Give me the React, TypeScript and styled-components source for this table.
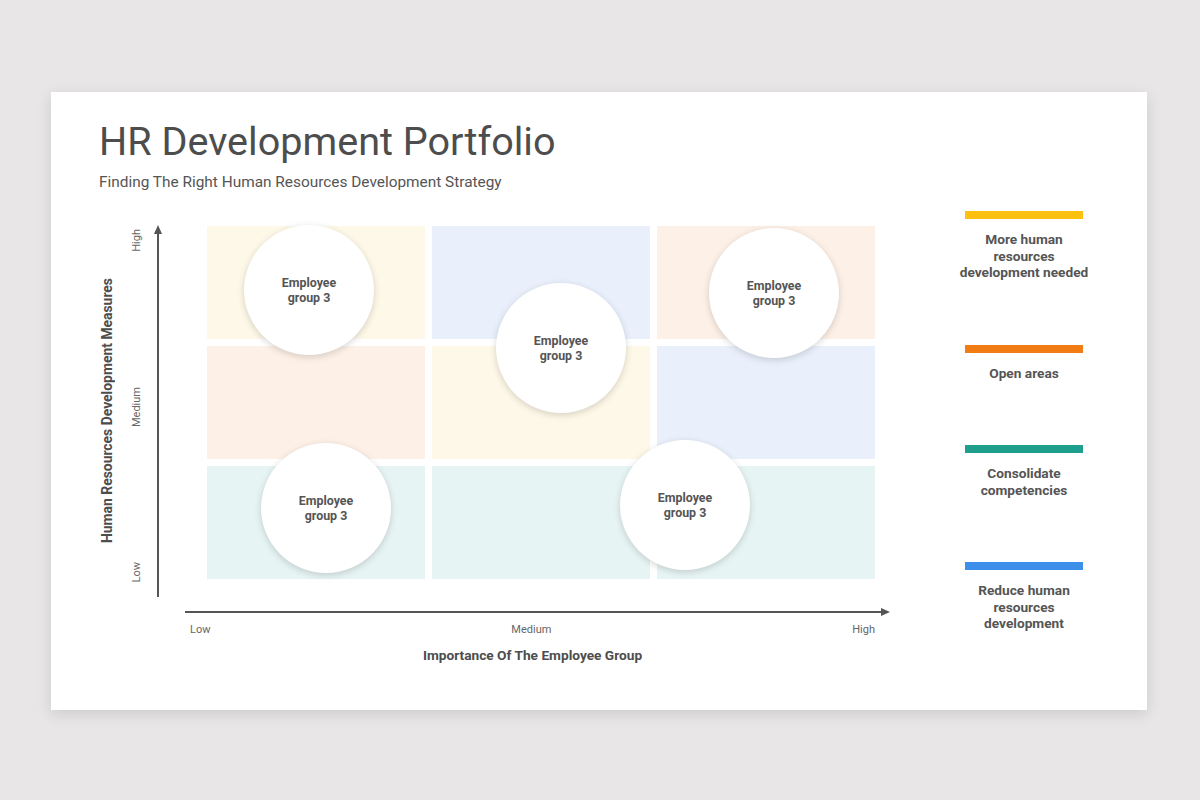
import styled, { createGlobalStyle } from "styled-components";

const GlobalStyle = createGlobalStyle`
  html, body {
    margin: 0;
    padding: 0;
    background: #e8e6e7;
    font-family: Roboto, "Liberation Sans", sans-serif;
  }
`;

const Page = styled.div`
  width: 1200px;
  height: 800px;
  padding: 92px 0 0 51px;
  box-sizing: border-box;
`;

const Slide = styled.div`
  width: 1096px;
  height: 618px;
  background: #ffffff;
  box-shadow: 0 4px 14px rgba(0, 0, 0, 0.12);
  padding: 26px 0 0 48px;
  box-sizing: border-box;
`;

const Title = styled.h1`
  margin: 0;
  font-size: 39.6px;
  line-height: 48px;
  font-weight: 400;
  color: #4d4d4d;
`;

const Subtitle = styled.p`
  margin: 6px 0 0;
  font-size: 15.4px;
  line-height: 20px;
  color: #555555;
`;

const Body = styled.div`
  display: flex;
  align-items: flex-start;
  margin-top: 19px;
`;

const Chart = styled.div`
  display: flex;
  align-items: flex-start;
  padding-top: 14px;
  width: 855px;
`;

const YSide = styled.div`
  display: flex;
  height: 372px;
`;

const VerticalText = styled.span<{ $bold?: boolean }>`
  writing-mode: vertical-rl;
  transform: rotate(180deg);
  font-size: ${(p) => (p.$bold ? "13.9px" : "11px")};
  font-weight: ${(p) => (p.$bold ? 700 : 400)};
  color: ${(p) => (p.$bold ? "#4d4d4d" : "#666666")};
  line-height: 16px;
  white-space: nowrap;
`;

const YTitleCol = styled.div`
  width: 16px;
  display: flex;
  align-items: center;
  justify-content: center;
`;

const YLabels = styled.div`
  width: 16px;
  margin-left: 14px;
  display: flex;
  flex-direction: column;
  justify-content: space-between;
  align-items: center;
  padding: 4px 0 15px;
  box-sizing: border-box;
`;

const YAxisSvg = styled.svg`
  display: block;
  margin-left: 6px;
`;

const Main = styled.div`
  display: flex;
  flex-direction: column;
`;

const Plot = styled.div`
  position: relative;
  margin: 1px 0 0 42px;
  display: grid;
  grid-template-columns: repeat(3, 218px);
  grid-template-rows: repeat(3, 113px);
  gap: 7px;
`;

const Cell = styled.div<{ $tone: string }>`
  background: ${(p) => p.$tone};
`;

const Bubble = styled.div`
  position: absolute;
  width: 130px;
  height: 130px;
  border-radius: 50%;
  background: #ffffff;
  box-shadow: 0 2px 7px rgba(0, 0, 0, 0.16);
  display: flex;
  align-items: center;
  justify-content: center;
  text-align: center;
  font-size: 12.4px;
  line-height: 15px;
  font-weight: 700;
  color: #555555;
`;

const XAxisSvg = styled.svg`
  display: block;
  margin: 28px 0 0 20px;
`;

const XLabels = styled.div`
  display: flex;
  justify-content: space-between;
  width: 685px;
  margin: 6px 0 0 25px;
  font-size: 11px;
  line-height: 14px;
  color: #666666;
`;

const XTitle = styled.div`
  width: 685px;
  margin: 10px 0 0 25px;
  text-align: center;
  font-size: 13.7px;
  line-height: 16px;
  font-weight: 700;
  color: #4d4d4d;
`;

const Legend = styled.div`
  width: 140px;
  display: flex;
  flex-direction: column;
  gap: 64px;
`;

const LegendItem = styled.div`
  display: flex;
  flex-direction: column;
  align-items: center;
`;

const LegendBar = styled.div<{ $color: string }>`
  width: 118px;
  height: 8px;
  background: ${(p) => p.$color};
`;

const LegendText = styled.div`
  margin-top: 12px;
  text-align: center;
  font-size: 13.7px;
  line-height: 16.5px;
  font-weight: 700;
  color: #555555;
  white-space: nowrap;
`;

const YELLOW = "#fef8e8";
const BLUE = "#e9f0fb";
const PEACH = "#fdf0e6";
const TEAL = "#e6f4f3";

const cells = [YELLOW, BLUE, PEACH, PEACH, YELLOW, BLUE, TEAL, TEAL, TEAL];

const bubbles = [
  { left: 37, top: -1 },
  { left: 289, top: 57 },
  { left: 502, top: 2 },
  { left: 54, top: 217 },
  { left: 413, top: 214 },
];

const legend = [
  { color: "#fcc010", lines: ["More human", "resources", "development needed"] },
  { color: "#f27c14", lines: ["Open areas"] },
  { color: "#1e9e8c", lines: ["Consolidate", "competencies"] },
  { color: "#3d8fe9", lines: ["Reduce human", "resources", "development"] },
];

export default function App() {
  return (
    <>
      <GlobalStyle />
      <Page>
        <Slide>
          <Title>HR Development Portfolio</Title>
          <Subtitle>Finding The Right Human Resources Development Strategy</Subtitle>
          <Body>
            <Chart>
              <YSide>
                <YTitleCol>
                  <VerticalText $bold>Human Resources Development Measures</VerticalText>
                </YTitleCol>
                <YLabels>
                  <VerticalText>High</VerticalText>
                  <VerticalText>Medium</VerticalText>
                  <VerticalText>Low</VerticalText>
                </YLabels>
                <YAxisSvg width="14" height="372" viewBox="0 0 14 372">
                  <line x1="7" y1="7" x2="7" y2="372" stroke="#555" strokeWidth="2" />
                  <polygon points="7,0 3,9 11,9" fill="#555" />
                </YAxisSvg>
              </YSide>
              <Main>
                <Plot>
                  {cells.map((tone, i) => (
                    <Cell key={i} $tone={tone} />
                  ))}
                  {bubbles.map((b, i) => (
                    <Bubble key={i} style={{ left: b.left, top: b.top }}>
                      Employee
                      <br />
                      group 3
                    </Bubble>
                  ))}
                </Plot>
                <XAxisSvg width="705" height="10" viewBox="0 0 705 10">
                  <line x1="0" y1="5" x2="696" y2="5" stroke="#555" strokeWidth="2" />
                  <polygon points="705,5 696,1 696,9" fill="#555" />
                </XAxisSvg>
                <XLabels>
                  <span>Low</span>
                  <span>Medium</span>
                  <span>High</span>
                </XLabels>
                <XTitle>Importance Of The Employee Group</XTitle>
              </Main>
            </Chart>
            <Legend>
              {legend.map((item, i) => (
                <LegendItem key={i}>
                  <LegendBar $color={item.color} />
                  <LegendText>
                    {item.lines.map((l, j) => (
                      <div key={j}>{l}</div>
                    ))}
                  </LegendText>
                </LegendItem>
              ))}
            </Legend>
          </Body>
        </Slide>
      </Page>
    </>
  );
}
